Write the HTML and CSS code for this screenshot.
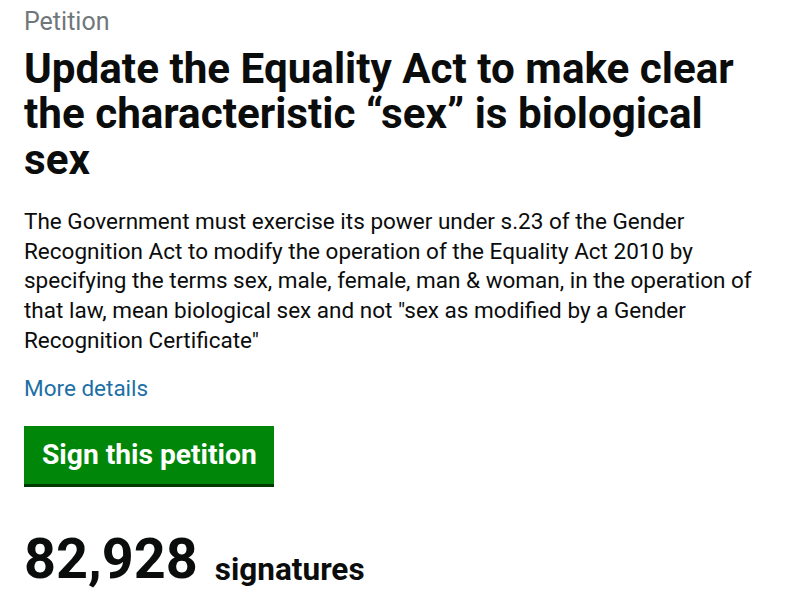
FILE: index.html
```html
<!DOCTYPE html>
<html lang="en">
<head>
<meta charset="utf-8">
<title>Petition</title>
<link rel="stylesheet" href="styles.css">
</head>
<body>
<main class="page">
  <p class="kicker">Petition</p>
  <h1 class="title">Update the Equality Act to make clear the characteristic “sex” is biological sex</h1>
  <p class="summary">The Government must exercise its power under s.23 of the Gender Recognition Act to modify the operation of the Equality Act 2010 by specifying the terms sex, male, female, man &amp; woman, in the operation of that law, mean biological sex and not "sex as modified by a Gender Recognition Certificate"</p>
  <a class="more" href="#">More details</a>
  <div class="actions"><a class="button" href="#">Sign this petition</a></div>
  <p class="count"><span class="count-num">82,928</span><span class="count-label">signatures</span></p>
</main>
</body>
</html>
```

FILE: styles.css
```css
html, body {
  margin: 0;
  padding: 0;
  background: #ffffff;
}
body {
  font-family: Roboto, "Liberation Sans", sans-serif;
  color: #0b0c0c;
}
.page {
  padding: 7px 24px 0 24px;
  display: flex;
  flex-direction: column;
  align-items: flex-start;
}
.kicker {
  margin: 0;
  font-size: 25px;
  line-height: 30px;
  color: #6f777b;
}
.title {
  margin: 9px 0 0;
  font-size: 42.2px;
  line-height: 45.3px;
  font-weight: 700;
  color: #0b0c0c;
}
.summary {
  margin: 25px 0 0;
  font-size: 22.5px;
  line-height: 29.7px;
  color: #0b0c0c;
}
.more {
  margin-top: 18px;
  font-size: 22.5px;
  line-height: 30px;
  color: #1d6fa5;
  text-decoration: none;
}
.actions {
  margin-top: 23px;
}
.button {
  display: inline-block;
  background: #00870a;
  color: #ffffff;
  font-size: 28.2px;
  font-weight: 700;
  line-height: 58px;
  padding: 0 17px 0 18px;
  box-shadow: 0 3px 0 #003a00;
  text-decoration: none;
}
.count {
  margin: 45px 0 0;
  line-height: 60px;
}
.count-num {
  font-size: 55.8px;
  font-weight: 700;
}
.count-label {
  margin-left: 17px;
  font-size: 31.5px;
  font-weight: 700;
  vertical-align: -2px;
}
```
